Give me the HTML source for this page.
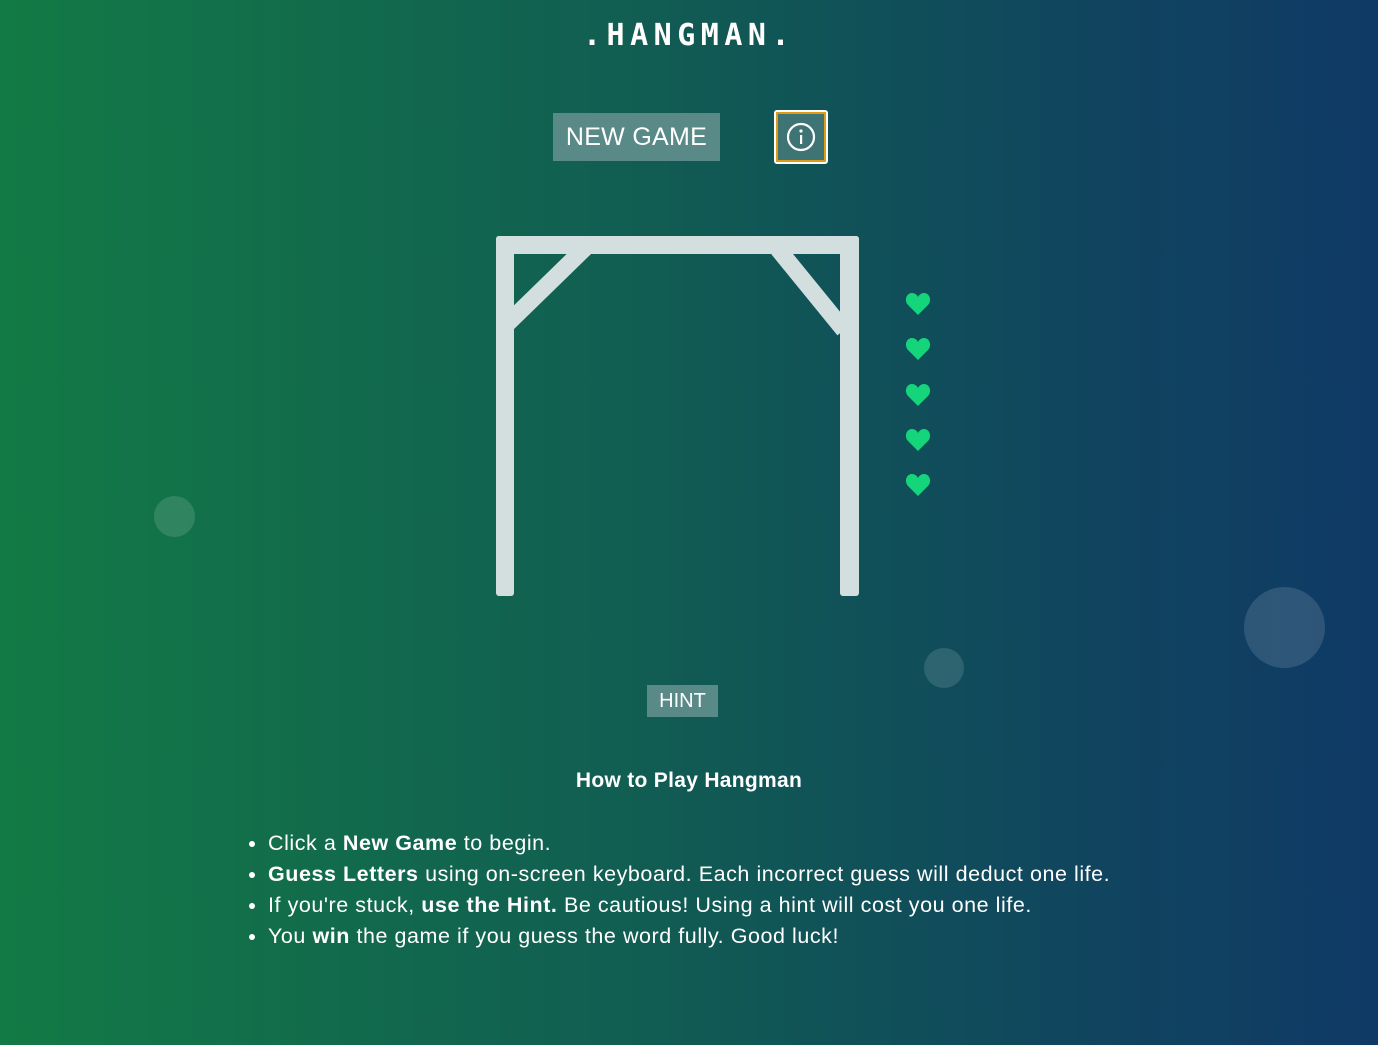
<!DOCTYPE html>
<html><head><style>
body{margin:0;width:1378px;height:1045px;overflow:hidden;background:linear-gradient(90deg,#127a45 0%,#115e52 45%,#10445f 80%,#0f3a66 100%);font-family:"Liberation Sans",sans-serif;color:#fff;position:relative}
.title{position:absolute;top:18px;left:0;width:1378px;text-align:center;font:bold 30px "DejaVu Sans Mono",monospace;letter-spacing:5.5px}
.ng{position:absolute;left:553px;top:113px;width:167px;height:48px;background:#5a8a88;font-size:25px;line-height:48px;text-align:center;letter-spacing:.3px}
.info{position:absolute;left:774px;top:110px;width:50px;height:50px;background:#3f7475;border:2px solid #fff;outline:2px solid #e09a18;outline-offset:-4px;border-radius:3px}
.hint{position:absolute;left:647px;top:685px;width:71px;height:32px;background:#5a8a88;font-size:20px;line-height:32px;text-align:center}
.bub{position:absolute;border-radius:50%;background:rgba(255,255,255,.13)}
h3{position:absolute;top:769px;left:0;width:1378px;text-align:center;margin:0;font-size:21px;font-weight:bold;letter-spacing:.3px}
ul{position:absolute;top:828px;left:248px;margin:0;padding:0 0 0 20px;font-size:21.5px;line-height:31px;letter-spacing:.55px;white-space:nowrap}
</style></head><body>
<div class="title">.HANGMAN.</div>
<div class="ng">NEW GAME</div>
<div class="info"><svg width="50" height="50"><circle cx="25" cy="25" r="13" fill="none" stroke="#fff" stroke-width="2.2"/><circle cx="25" cy="19" r="1.6" fill="#fff"/><rect x="24" y="23" width="2.2" height="9" fill="#fff"/></svg></div>
<svg style="position:absolute;left:0;top:0" width="1378" height="1045">
<g fill="#d3dfdf"><rect x="496" y="236" width="18" height="360" rx="3"/><rect x="496" y="236" width="363" height="18" rx="3"/><rect x="840" y="236" width="19" height="360" rx="3"/></g>
<g stroke="#d3dfdf" stroke-width="17"><line x1="508" y1="323" x2="585" y2="248"/><line x1="778" y1="249" x2="844" y2="330"/></g>
</svg>
<svg style="position:absolute;left:905px;top:291px" width="28" height="210">
<defs><path id="ht" d="M13 24 L3 14 C-1 10 1 2 7 2 C10 2 12 4 13 6 C14 4 16 2 19 2 C25 2 27 10 23 14 Z" fill="#14d57a"/></defs>
<use href="#ht" y="0"/><use href="#ht" y="45"/><use href="#ht" y="91"/><use href="#ht" y="136"/><use href="#ht" y="181"/>
</svg>
<div class="bub" style="left:154px;top:496px;width:41px;height:41px"></div>
<div class="bub" style="left:924px;top:648px;width:40px;height:40px"></div>
<div class="bub" style="left:1244px;top:587px;width:81px;height:81px"></div>
<div class="hint">HINT</div>
<h3>How to Play Hangman</h3>
<ul>
<li>Click a <b>New Game</b> to begin.</li>
<li><b>Guess Letters</b> using on-screen keyboard. Each incorrect guess will deduct one life.</li>
<li>If you're stuck, <b>use the Hint.</b> Be cautious! Using a hint will cost you one life.</li>
<li>You <b>win</b> the game if you guess the word fully. Good luck!</li>
</ul>
</body></html>
